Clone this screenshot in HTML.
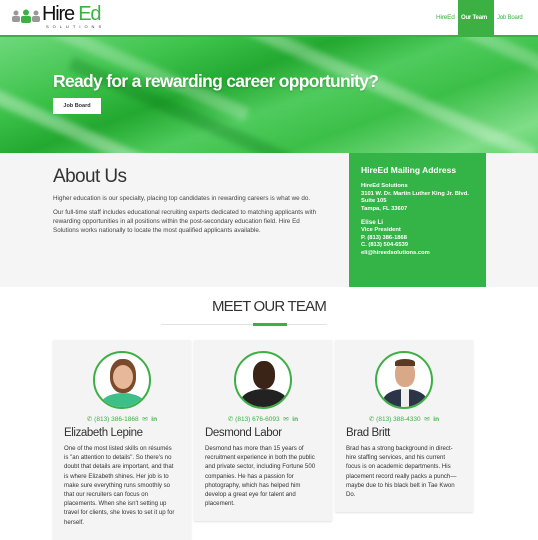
<!DOCTYPE html>
<html><head><meta charset="utf-8"><style>
*{margin:0;padding:0;box-sizing:border-box}
body{width:538px;height:536px;overflow:hidden;font-family:"Liberation Sans",sans-serif;background:#fff;position:relative}
.hdr{position:absolute;left:0;top:0;width:538px;height:37px;background:#fff;border-bottom:2px solid #3cb043}
.nav{position:absolute;top:0;font-size:6.5px;color:#3cb043;line-height:36px;letter-spacing:-.2px}
.hero{position:absolute;top:37px;left:0;width:538px;height:116px;background:linear-gradient(160deg,#6fd87c 0%,#3cc24a 25%,#23a830 40%,#4fcb5d 55%,#3cbf48 70%,#7fdd88 90%,#5ed36a 100%);overflow:hidden}
.streak{position:absolute;height:14px;background:rgba(255,255,255,.25);transform:rotate(24deg);filter:blur(3px)}
.about{position:absolute;top:153px;left:0;width:538px;height:134px;background:#f5f5f5}
.p{font-size:6.3px;color:#444;line-height:9px}
.box{position:absolute;left:349px;top:153px;width:137px;height:134px;background:#34b446;color:#fff;padding:14px 12px;font-size:5.8px;font-weight:bold;line-height:7.8px}
.card{position:absolute;top:340px;width:138px;background:#f4f4f4;box-shadow:0 1px 2px rgba(0,0,0,.12);padding:0 11px}
.circ{width:58px;height:58px;border-radius:50%;border:2px solid #3cb043;margin:11px auto 0;background:#fff;position:relative;overflow:hidden}
.ct{text-align:center;font-size:6.5px;color:#3cb043;margin-top:6px}
.nm{font-size:11.5px;color:#333;margin-top:4px;letter-spacing:-.4px}
.tx{font-size:6.1px;color:#333;line-height:9.2px;margin-top:5px;padding-right:4px}
</style></head><body>
<div class="hdr">
  <svg style="position:absolute;left:11px;top:9px" width="30" height="14"><circle cx="5" cy="4" r="2.5" fill="#999"/><rect x="1" y="7" width="8" height="6" rx="2" fill="#999"/><circle cx="15" cy="3.5" r="3" fill="#3cb043"/><rect x="10" y="7" width="10" height="7" rx="2" fill="#3cb043"/><circle cx="25" cy="4" r="2.5" fill="#999"/><rect x="21" y="7" width="8" height="6" rx="2" fill="#999"/></svg>
  <div style="position:absolute;left:42px;top:4px;font-size:20px;letter-spacing:-1.2px;line-height:20px;color:#111">Hire <span style="color:#3cb043">Ed</span></div>
  <div style="position:absolute;left:46px;top:24px;font-size:4px;letter-spacing:4px;color:#333">SOLUTIONS</div>
  <div class="nav" style="left:436px">HireEd</div>
  <div style="position:absolute;left:458px;top:0;width:36px;height:36px;background:#3cb043"></div>
  <div class="nav" style="left:461px;color:#fff;font-weight:bold;font-size:6px">Our Team</div>
  <div class="nav" style="left:497px;font-size:6px">Job Board</div>
</div>
<div class="hero">
  <div class="streak" style="left:-40px;top:10px;width:300px"></div>
  <div class="streak" style="left:200px;top:40px;width:350px;background:rgba(255,255,255,.3)"></div>
  <div class="streak" style="left:60px;top:70px;width:250px;background:rgba(0,100,10,.25)"></div>
  <div class="streak" style="left:350px;top:-10px;width:250px"></div>
  <div class="streak" style="left:-20px;top:90px;width:200px;background:rgba(255,255,255,.35)"></div>
  <div style="position:absolute;left:53px;top:34px;font-size:17.5px;font-weight:bold;color:#fff;letter-spacing:-.7px;text-shadow:0 1px 2px rgba(0,0,0,.2)">Ready for a rewarding career opportunity?</div>
  <div style="position:absolute;left:53px;top:61px;width:48px;height:16px;background:#fff;font-size:5.5px;font-weight:bold;color:#333;text-align:center;line-height:16px">Job Board</div>
</div>
<div class="about">
  <div style="position:absolute;left:53px;top:13px;font-size:19px;color:#333;letter-spacing:-.6px">About Us</div>
  <div class="p" style="position:absolute;left:53px;top:41px;width:300px">Higher education is our specialty, placing top candidates in rewarding careers is what we do.</div>
  <div class="p" style="position:absolute;left:53px;top:55px;width:272px">Our full-time staff includes educational recruiting experts dedicated to matching applicants with rewarding opportunities in all positions within the post-secondary education field. Hire Ed Solutions works nationally to locate the most qualified applicants available.</div>
</div>
<div class="box">
  <div style="font-size:8.5px;margin-bottom:8px;font-weight:bold">HireEd Mailing Address</div>
  HireEd Solutions<br>3101 W. Dr. Martin Luther King Jr. Blvd.<br>Suite 105<br>Tampa, FL 33607
  <div style="margin-top:5px;font-size:6.3px">Elise Li</div>Vice President<br>P. (813) 386-1868<br>C. (813) 504-6539<br>eli@hireedsolutions.com
</div>
<div style="position:absolute;left:0;top:298px;width:538px;text-align:center;font-size:15px;color:#333;letter-spacing:-.8px">MEET OUR TEAM</div>
<div style="position:absolute;left:161px;top:324px;width:166px;height:1px;background:#e2e2e2"></div>
<div style="position:absolute;left:253px;top:323px;width:34px;height:3px;background:#3cb043"></div>

<div class="card" style="left:53px;height:200px">
  <div class="circ"><div style="position:absolute;left:15px;top:6px;width:26px;height:34px;border-radius:45%;background:#7a4a2a"></div><div style="position:absolute;left:18px;top:12px;width:20px;height:24px;border-radius:50%;background:#e8b89a"></div><div style="position:absolute;left:6px;top:40px;width:44px;height:22px;border-radius:50% 50% 0 0;background:#3dbf8a"></div></div>
  <div class="ct">✆ (813) 386-1868 &nbsp;✉ &nbsp;<b>in</b></div>
  <div class="nm">Elizabeth Lepine</div>
  <div class="tx">One of the most listed skills on résumés is "an attention to details". So there's no doubt that details are important, and that is where Elizabeth shines. Her job is to make sure everything runs smoothly so that our recruiters can focus on placements. When she isn't setting up travel for clients, she loves to set it up for herself.</div>
</div>
<div class="card" style="left:194px;height:181px">
  <div class="circ"><div style="position:absolute;left:17px;top:8px;width:22px;height:28px;border-radius:45%;background:#3a2418"></div><div style="position:absolute;left:5px;top:36px;width:46px;height:24px;border-radius:50% 50% 0 0;background:#222"></div></div>
  <div class="ct">✆ (813) 676-6093 &nbsp;✉ &nbsp;<b>in</b></div>
  <div class="nm">Desmond Labor</div>
  <div class="tx">Desmond has more than 15 years of recruitment experience in both the public and private sector, including Fortune 500 companies. He has a passion for photography, which has helped him develop a great eye for talent and placement.</div>
</div>
<div class="card" style="left:335px;height:172px">
  <div class="circ"><div style="position:absolute;left:18px;top:8px;width:20px;height:26px;border-radius:45%;background:#d9a888"></div><div style="position:absolute;left:18px;top:6px;width:20px;height:7px;border-radius:50% 50% 0 0;background:#5a3a22"></div><div style="position:absolute;left:6px;top:36px;width:44px;height:24px;border-radius:50% 50% 0 0;background:#2c3548"></div><div style="position:absolute;left:24px;top:36px;width:8px;height:24px;background:#eee"></div></div>
  <div class="ct">✆ (813) 388-4330 &nbsp;✉ &nbsp;<b>in</b></div>
  <div class="nm">Brad Britt</div>
  <div class="tx">Brad has a strong background in direct-hire staffing services, and his current focus is on academic departments. His placement record really packs a punch—maybe due to his black belt in Tae Kwon Do.</div>
</div>
</body></html>
